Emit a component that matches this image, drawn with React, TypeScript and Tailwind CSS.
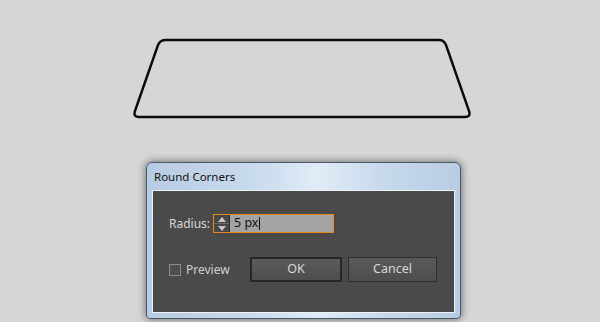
function Trapezoid() {
  return (
    <svg width="600" height="162" viewBox="0 0 600 162" className="block">
      <path
        d="M 166 40 L 439 40 Q 444 40 446 45 L 469 111 Q 471 117 465 117 L 139 117 Q 133 117 135 111 L 158 45 Q 160 40 166 40 Z"
        fill="none"
        stroke="#0a0a0a"
        strokeWidth="2.4"
        strokeLinejoin="round"
      />
    </svg>
  )
}

function Spinner() {
  return (
    <div className="flex h-full w-[16px] flex-col border-r border-[#2e2e2e] bg-[#474747]">
      <div className="flex flex-1 items-center justify-center border-b border-[#6a6a6a]">
        <svg width="8" height="5" viewBox="0 0 8 5"><path d="M0 5 L4 0 L8 5 Z" fill="#c8c8c8" /></svg>
      </div>
      <div className="flex flex-1 items-center justify-center">
        <svg width="8" height="5" viewBox="0 0 8 5"><path d="M0 0 L4 5 L8 0 Z" fill="#c8c8c8" /></svg>
      </div>
    </div>
  )
}

export default function App() {
  return (
    <div
      className="h-[322px] w-[600px] overflow-hidden bg-[#d5d6d7]"
      style={{ fontFamily: '"Noto Sans", "DejaVu Sans", sans-serif' }}
    >
      <Trapezoid />

      {/* Round Corners dialog */}
      <div className="ml-[146px] flex h-[157px] w-[315px] flex-col rounded-t-[6px] rounded-b-[4px] border border-[#4a5868] bg-[linear-gradient(to_right,#b7cbe2_0%,#c9dbee_35%,#e1ecf7_55%,#c7d9ec_75%,#b8cce3_100%)] px-[5px] pb-[5px] shadow-[0_0_9px_rgba(0,0,0,0.55)]">
        <div className="flex h-[27px] items-center pl-[2px] pt-[1px] text-[11.5px] text-[#111]">Round Corners</div>

        <div className="flex flex-1 flex-col border border-[#eef3f9] bg-[#4a4a4a] pl-[16px] pt-[23px]">
          <div className="flex items-center">
            <span className="w-[44px] text-[12px] text-[#d6d6d6]">Radius:</span>
            <div className="flex h-[19px] w-[121px] border border-[#e68a1e] bg-[#a3a3a3]">
              <Spinner />
              <span className="flex items-center pl-[4px] text-[12.5px] text-[#111]">
                5 px<span className="ml-[1px] inline-block h-[13px] w-[1px] bg-[#111]" />
              </span>
            </div>
          </div>

          <div className="mt-[24px] flex items-center">
            <div className="flex w-[81px] items-center">
              <span className="h-[12px] w-[12px] border border-[#8c8c8c] bg-[#4e4e4e]" />
              <span className="ml-[5px] text-[12px] text-[#d0d0d0]">Preview</span>
            </div>
            <button className="h-[25px] w-[92px] border-2 border-[#262626] bg-[linear-gradient(#5b5b5b,#4e4e4e)] text-[12.5px] text-[#d8d8d8]">
              OK
            </button>
            <button className="ml-[6px] h-[25px] w-[89px] border border-[#2f2f2f] bg-[linear-gradient(#5a5a5a,#4d4d4d)] text-[12.5px] text-[#d8d8d8]">
              Cancel
            </button>
          </div>
        </div>
      </div>
    </div>
  )
}
